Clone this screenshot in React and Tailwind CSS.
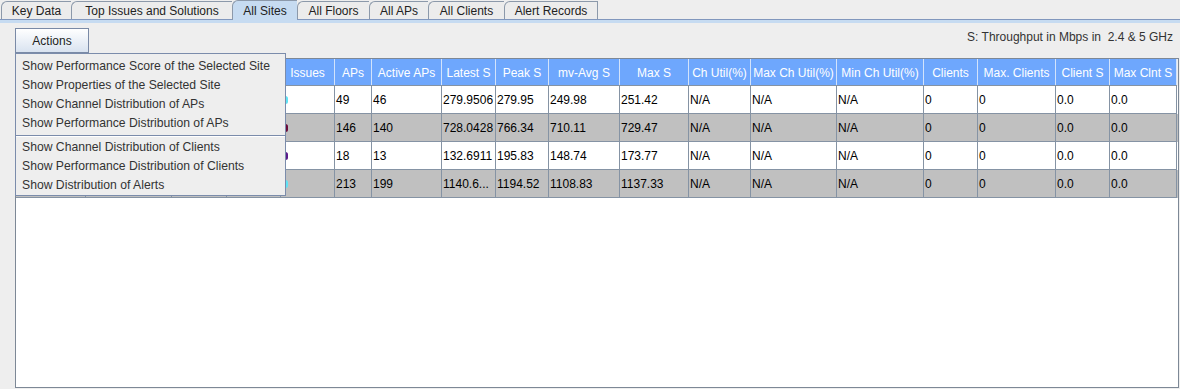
import React from "react";

const tabs = [
  { label: "Key Data", w: "w-[70px]" },
  { label: "Top Issues and Solutions", w: "w-[161px]" },
  { label: "All Sites", w: "w-[65px]", active: true },
  { label: "All Floors", w: "w-[72px]" },
  { label: "All APs", w: "w-[59px]" },
  { label: "All Clients", w: "w-[76px]" },
  { label: "Alert Records", w: "w-[94px]" },
];

const cols = [
  { name: "", w: "w-[70px]" },
  { name: "", w: "w-[86px]" },
  { name: "", w: "w-[55px]" },
  { name: "", w: "w-[54px]" },
  { name: "Issues", w: "w-[54px]" },
  { name: "APs", w: "w-[37px]" },
  { name: "Active APs", w: "w-[70px]" },
  { name: "Latest S", w: "w-[54px]" },
  { name: "Peak S", w: "w-[53px]" },
  { name: "mv-Avg S", w: "w-[71px]" },
  { name: "Max S", w: "w-[69px]" },
  { name: "Ch Util(%)", w: "w-[62px]" },
  { name: "Max Ch Util(%)", w: "w-[86px]" },
  { name: "Min Ch Util(%)", w: "w-[87px]" },
  { name: "Clients", w: "w-[54px]" },
  { name: "Max. Clients", w: "w-[78px]" },
  { name: "Client S", w: "w-[54px]" },
  { name: "Max Clnt S", w: "w-[67px]" },
];

const rows = [
  { bg: "bg-white", mark: "bg-[#5fe3f5]", v: ["49", "46", "279.9506", "279.95", "249.98", "251.42", "N/A", "N/A", "N/A", "0", "0", "0.0", "0.0"] },
  { bg: "bg-[#c0c0c0]", mark: "bg-[#6a0a3a]", v: ["146", "140", "728.0428", "766.34", "710.11", "729.47", "N/A", "N/A", "N/A", "0", "0", "0.0", "0.0"] },
  { bg: "bg-white", mark: "bg-[#5a1a8a]", v: ["18", "13", "132.6911", "195.83", "148.74", "173.77", "N/A", "N/A", "N/A", "0", "0", "0.0", "0.0"] },
  { bg: "bg-[#c0c0c0]", mark: "bg-[#5fe3f5]", v: ["213", "199", "1140.6...", "1194.52", "1108.83", "1137.33", "N/A", "N/A", "N/A", "0", "0", "0.0", "0.0"] },
];

const menu1 = [
  "Show Performance Score of the Selected Site",
  "Show Properties of the Selected Site",
  "Show Channel Distribution of APs",
  "Show Performance Distribution of APs",
];
const menu2 = [
  "Show Channel Distribution of Clients",
  "Show Performance Distribution of Clients",
  "Show Distribution of Alerts",
];

export default function App() {
  return (
    <div className="relative w-[1180px] h-[389px] overflow-hidden bg-[#eeeeee] font-['Liberation_Sans',Arial,sans-serif] text-[12px] text-[#222]">
      {/* tab strip */}
      <div className="flex h-[19px] items-end pl-[1px]">
        {tabs.map((t, i) => (
          <div
            key={t.label}
            className={`${t.w} h-[18px] flex items-center justify-center whitespace-nowrap border-t border-l border-[#8c99aa] rounded-tl-[6px] ${
              i === tabs.length - 1 ? "border-r" : ""
            } ${t.active ? "bg-[#c6dbf1] h-[20px] -mb-[1px] relative z-10" : "bg-[#ececec]"}`}
          >
            {t.label}
          </div>
        ))}
      </div>
      <div className="h-[1px] bg-[#8197bd]" />
      <div className="h-[3px] bg-[#c6dbf1]" />

      {/* toolbar */}
      <div className="flex h-[35px] items-start justify-between pl-[15px] pr-[7px]">
        <button className="mt-[5px] w-[74px] h-[25px] border border-[#7a8aa6] bg-gradient-to-b from-[#ffffff] to-[#d9e3f0] text-[#222] text-[12px]">
          Actions
        </button>
        <div className="mt-[5px] text-[#333]">S: Throughput in Mbps in&nbsp; 2.4 &amp; 5 GHz</div>
      </div>

      {/* table pane */}
      <div className="ml-[15px] mr-[1px] h-[330px] border border-[#7d8896] bg-white">
        <div className="flex h-[27px] bg-[#6ea7fd] text-white">
          {cols.map((c, i) => (
            <div
              key={i}
              className={`${c.w} shrink-0 flex items-center justify-center overflow-hidden whitespace-nowrap border-r border-[#d3e3fb]`}
            >
              {c.name}
            </div>
          ))}
          <div className="flex-1 bg-[#eeeeee]" />
        </div>
        {rows.map((r, ri) => (
          <div key={ri} className={`flex h-[28px] ${r.bg} text-black`}>
            {cols.map((c, ci) => (
              <div
                key={ci}
                className={`${c.w} shrink-0 flex items-center pl-[1px] overflow-hidden whitespace-nowrap border-r border-b border-[#8593a4] border-t ${
                  ri === 0 ? "border-t-[#8593a4]" : "border-t-transparent"
                } -mt-[1px]`}
              >
                {ci === 4 ? (
                  <span className={`ml-[1px] w-[5px] h-[8px] rounded-full ${r.mark}`} />
                ) : ci >= 5 ? (
                  r.v[ci - 5]
                ) : null}
              </div>
            ))}
          </div>
        ))}
      </div>

      {/* popup menu */}
      <div className="absolute left-[15px] top-[53px] w-[271px] border border-[#7b8cab] bg-[#eeeeee] pt-[3px] text-[#333] text-[12.2px]">
        {menu1.map((m) => (
          <div key={m} className="h-[19px] flex items-center pl-[6px] whitespace-nowrap">
            {m}
          </div>
        ))}
        <div className="mt-[2px] h-[1px] bg-[#7b8cab]" />
        <div className="h-[1px] mb-[1px] bg-white" />
        {menu2.map((m) => (
          <div key={m} className="h-[19px] flex items-center pl-[6px] whitespace-nowrap">
            {m}
          </div>
        ))}
      </div>
    </div>
  );
}
